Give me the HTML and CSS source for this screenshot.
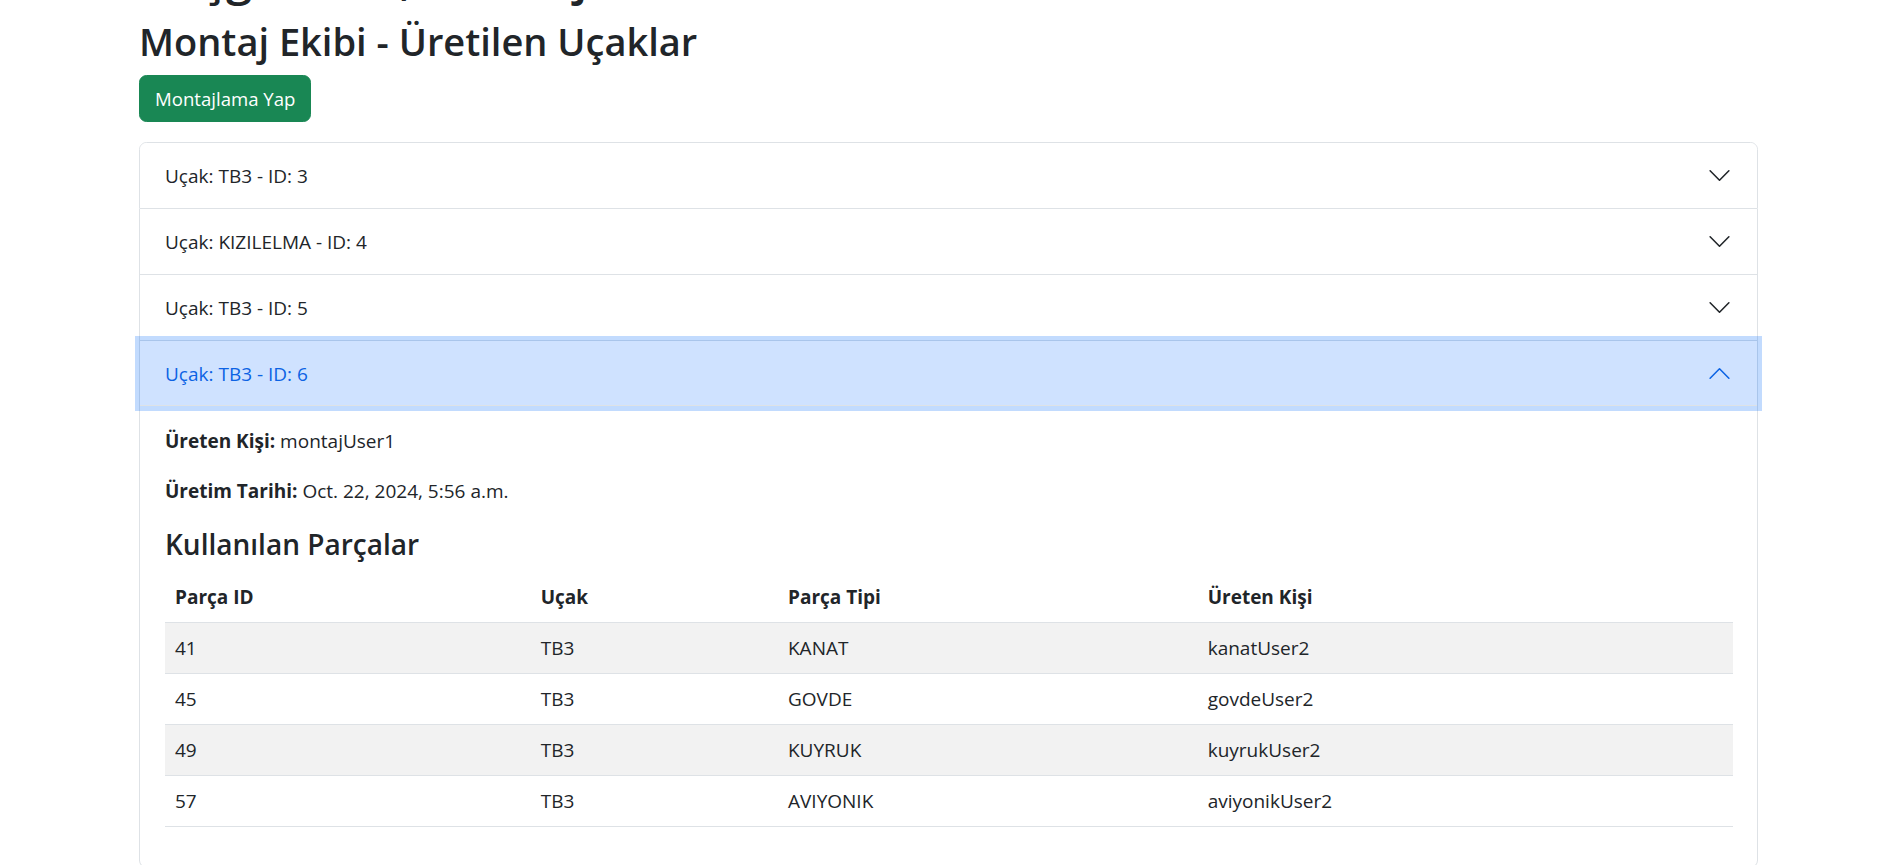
FILE: index.html
```html
<!DOCTYPE html>
<html lang="tr">
<head>
<meta charset="utf-8">
<title>Montaj Ekibi - Üretilen Uçaklar</title>
<link rel="stylesheet" href="styles.css">
</head>
<body>
<div class="container">
  <h1 class="welcome">Hoşgeldiniz, montajUser1</h1>
  <h2 class="title">Montaj Ekibi - Üretilen Uçaklar</h2>
  <button class="btn-success" type="button">Montajlama Yap</button>

  <div class="accordion">
    <div class="acc-item">
      <h2 class="acc-header"><button class="acc-btn" type="button"><span>Uçak: TB3 - ID: 3</span><svg class="chev" viewBox="0 0 16 16" fill="none" stroke="currentColor" stroke-linecap="round" stroke-linejoin="round"><path d="M2 5L8 11L14 5"/></svg></button></h2>
    </div>
    <div class="acc-item">
      <h2 class="acc-header"><button class="acc-btn" type="button"><span>Uçak: KIZILELMA - ID: 4</span><svg class="chev" viewBox="0 0 16 16" fill="none" stroke="currentColor" stroke-linecap="round" stroke-linejoin="round"><path d="M2 5L8 11L14 5"/></svg></button></h2>
    </div>
    <div class="acc-item">
      <h2 class="acc-header"><button class="acc-btn" type="button"><span>Uçak: TB3 - ID: 5</span><svg class="chev" viewBox="0 0 16 16" fill="none" stroke="currentColor" stroke-linecap="round" stroke-linejoin="round"><path d="M2 5L8 11L14 5"/></svg></button></h2>
    </div>
    <div class="acc-item">
      <h2 class="acc-header"><button class="acc-btn active" type="button"><span>Uçak: TB3 - ID: 6</span><svg class="chev" viewBox="0 0 16 16" fill="none" stroke="currentColor" stroke-linecap="round" stroke-linejoin="round"><path d="M2 5L8 11L14 5"/></svg></button></h2>
      <div class="acc-body">
        <p><strong>Üreten Kişi:</strong> montajUser1</p>
        <p><strong>Üretim Tarihi:</strong> Oct. 22, 2024, 5:56 a.m.</p>
        <h4 class="sub">Kullanılan Parçalar</h4>
        <table class="parts">
          <thead>
            <tr><th class="c1">Parça ID</th><th class="c2">Uçak</th><th class="c3">Parça Tipi</th><th class="c4">Üreten Kişi</th></tr>
          </thead>
          <tbody>
            <tr><td>41</td><td>TB3</td><td>KANAT</td><td>kanatUser2</td></tr>
            <tr><td>45</td><td>TB3</td><td>GOVDE</td><td>govdeUser2</td></tr>
            <tr><td>49</td><td>TB3</td><td>KUYRUK</td><td>kuyrukUser2</td></tr>
            <tr><td>57</td><td>TB3</td><td>AVIYONIK</td><td>aviyonikUser2</td></tr>
          </tbody>
        </table>
      </div>
    </div>
  </div>
</div>
</body>
</html>
```
FILE: styles.css
```css
* { box-sizing: border-box; }
html, body { margin: 0; padding: 0; background: #fff; }
body {
  font-family: "Open Sans", "Noto Sans", "Liberation Sans", sans-serif;
  font-size: 19px;
  line-height: 30px;
  color: #212529;
}
.container {
  width: 1619px;
  margin: -53px 0 0 calc(50% - 807.5px);
}
.welcome {
  font-size: 47px;
  line-height: 60px;
  font-weight: 600;
  margin: 0 0 10px;
}
.title {
  font-size: 38px;
  line-height: 48px;
  font-weight: 600;
  margin: 0 0 10px;
}
.btn-success {
  display: block;
  font-family: inherit;
  font-size: 18.6px;
  line-height: 30px;
  padding: 7.5px 15px;
  color: #fff;
  background: #198754;
  border: 1px solid #198754;
  border-radius: 7.5px;
}
.accordion {
  margin-top: 20px;
}
.acc-item {
  border: 1px solid #dee2e6;
  background: #fff;
}
.acc-item + .acc-item { border-top: 0; }
.acc-item:first-child { border-top-left-radius: 7.5px; border-top-right-radius: 7.5px; }
.acc-item:first-child .acc-btn { border-top-left-radius: 6.5px; border-top-right-radius: 6.5px; }
.acc-item:last-child { border-bottom-left-radius: 7.5px; border-bottom-right-radius: 7.5px; }
.acc-header { margin: 0; font-size: inherit; font-weight: 400; line-height: inherit; }
.acc-btn {
  display: flex;
  align-items: center;
  width: 100%;
  padding: 17.5px 25px;
  font-family: inherit;
  font-size: 19px;
  line-height: 30px;
  color: #212529;
  background: #fff;
  border: 0;
  text-align: left;
}
.chev {
  width: 25px;
  height: 25px;
  margin-left: auto;
  flex-shrink: 0;
  color: #212529;
}
.acc-btn.active {
  position: relative;
  z-index: 3;
  color: #0c63e4;
  background: #cfe2ff;
  box-shadow: inset 0 -1px 0 #dee2e6, 0 0 0 5px rgba(13, 110, 253, 0.25);
}
.acc-btn.active .chev {
  color: #0c63e4;
  transform: rotate(180deg);
}
.acc-body {
  padding: 20px 25px;
}
.acc-body p { margin: 0 0 20px; }
.acc-body strong { font-weight: 700; }
.sub {
  font-size: 28px;
  line-height: 36px;
  font-weight: 600;
  margin: 0 0 10px;
}
.parts {
  width: 100%;
  border-collapse: collapse;
  table-layout: fixed;
  margin-bottom: 20px;
}
.parts th, .parts td {
  padding: 10px;
  border-bottom: 1px solid #dee2e6;
  text-align: left;
}
.parts th { font-weight: 700; vertical-align: bottom; }
.parts tbody tr:nth-child(odd) td { background: #f2f2f2; }
.c1 { width: 365.7px; }
.c2 { width: 247.3px; }
.c3 { width: 419.7px; }
.c4 { width: 535.3px; }
```
